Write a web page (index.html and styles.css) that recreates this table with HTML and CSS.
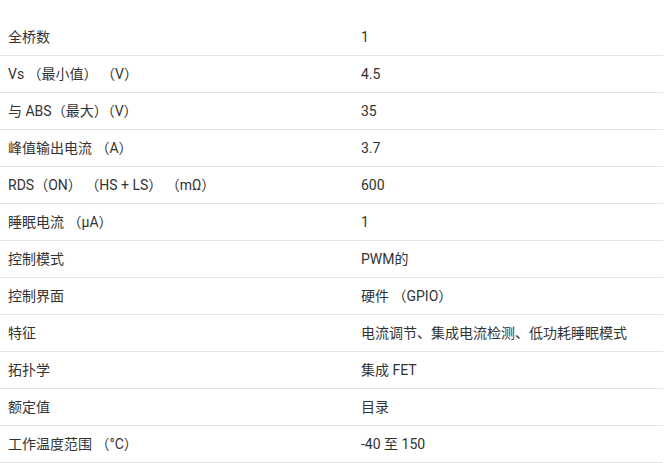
FILE: index.html
```html
<!DOCTYPE html>
<html lang="zh">
<head>
<meta charset="utf-8">
<link rel="stylesheet" href="styles.css">
</head>
<body>
<table class="spec">
<tbody>
<tr><td class="k">全桥数</td><td class="v">1</td></tr>
<tr><td class="k">Vs （最小值） （V）</td><td class="v">4.5</td></tr>
<tr><td class="k">与 ABS（最大）（V）</td><td class="v">35</td></tr>
<tr><td class="k">峰值输出电流 （A）</td><td class="v">3.7</td></tr>
<tr><td class="k">RDS（ON） （HS + LS） （mΩ）</td><td class="v">600</td></tr>
<tr><td class="k">睡眠电流 （μA）</td><td class="v">1</td></tr>
<tr><td class="k">控制模式</td><td class="v">PWM的</td></tr>
<tr><td class="k">控制界面</td><td class="v">硬件 （GPIO）</td></tr>
<tr><td class="k">特征</td><td class="v">电流调节、集成电流检测、低功耗睡眠模式</td></tr>
<tr><td class="k">拓扑学</td><td class="v">集成 FET</td></tr>
<tr><td class="k">额定值</td><td class="v">目录</td></tr>
<tr><td class="k">工作温度范围 （°C）</td><td class="v">-40 至 150</td></tr>
</tbody>
</table>
</body>
</html>
```
FILE: styles.css
```css
html, body {
  margin: 0;
  padding: 0;
  background: #ffffff;
}
body {
  padding-top: 19px;
  font-family: Roboto, "Noto Sans CJK SC", sans-serif;
  font-size: 14px;
  color: #333333;
}
.spec {
  width: 663px;
  border-collapse: collapse;
  table-layout: fixed;
}
.spec td {
  height: 36px;
  padding: 0 8px;
  border-bottom: 1px solid #e4e4e4;
  vertical-align: middle;
  line-height: 20px;
  white-space: nowrap;
}
.spec .k {
  width: 337px;
}
```
